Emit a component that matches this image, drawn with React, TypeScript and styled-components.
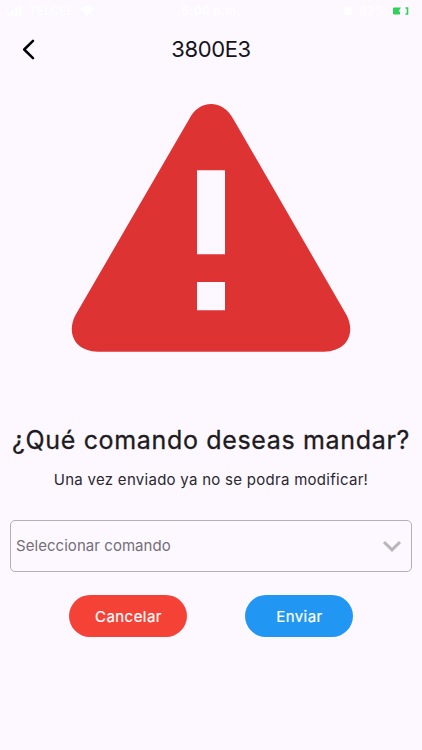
import React from "react";
import styled, { createGlobalStyle } from "styled-components";

const GlobalStyle = createGlobalStyle`
  * { box-sizing: border-box; }
  body { margin: 0; background: #fdf8ff; font-family: Inter, "Liberation Sans", sans-serif; }
`;

const Screen = styled.main`
  width: 422px;
  height: 750px;
  display: flex;
  flex-direction: column;
  background: #fdf8ff;
  overflow: hidden;
`;

const StatusBar = styled.div`
  height: 22px;
  padding: 0 12px 0 7px;
  display: grid;
  grid-template-columns: 1fr auto 1fr;
  align-items: center;
  color: #fff;
  font-size: 12px;
  line-height: 22px;
`;

const StatusGroup = styled.div<{ $end?: boolean }>`
  display: flex;
  align-items: center;
  gap: 7px;
  justify-content: ${(p) => (p.$end ? "flex-end" : "flex-start")};
`;

const Clock = styled.span`
  padding-left: 5px;
  font-weight: 600;
  letter-spacing: 0.3px;
`;

const Header = styled.header`
  height: 54px;
  display: grid;
  grid-template-columns: 57px 1fr 57px;
  align-items: center;
`;

const BackButton = styled.button`
  border: 0;
  padding: 0;
  height: 54px;
  background: none;
  display: flex;
  align-items: center;
  justify-content: center;
`;

const Title = styled.h1`
  margin: 0;
  text-align: center;
  font-size: 22px;
  line-height: 26px;
  font-weight: 400;
  letter-spacing: -0.4px;
  color: #16141a;
`;

const Warning = styled.div`
  height: 304px;
  padding-top: 27px;
  display: flex;
  justify-content: center;
`;

const Question = styled.h2`
  margin: 44px 0 0;
  text-align: center;
  white-space: nowrap;
  font-size: 25px;
  line-height: 32px;
  font-weight: 400;
  letter-spacing: 0.66px;
  -webkit-text-stroke: 0.3px #1d1b20;
  color: #1d1b20;
`;

const Note = styled.p`
  margin: 13px 0 0;
  text-align: center;
  font-size: 15px;
  line-height: 22px;
  letter-spacing: 0.28px;
  color: #2b292e;
`;

const Select = styled.button`
  margin: 29px 10px 0;
  height: 52px;
  padding: 0 9px 0 5px;
  border: 1.5px solid #b3afb5;
  border-radius: 5px;
  background: transparent;
  display: flex;
  align-items: center;
  justify-content: space-between;
  font: 400 15px/22px Inter, "Liberation Sans", sans-serif;
  letter-spacing: 0.05px;
  color: #736f77;
`;

const Actions = styled.div`
  margin: 23.3px 0 0 69.3px;
  display: flex;
  gap: 58.7px;
`;

const Pill = styled.button<{ $color: string; $width: number }>`
  width: ${(p) => p.$width}px;
  height: 42px;
  padding: 2px 0 0 1px;
  border: 0;
  border-radius: 21px;
  background: ${(p) => p.$color};
  color: #fff;
  font: 400 15px/22px Inter, "Liberation Sans", sans-serif;
  -webkit-text-stroke: 0.2px #fff;
  letter-spacing: 0.45px;
`;

export default function App() {
  return (
    <>
      <GlobalStyle />
      <Screen>
        <StatusBar>
          <StatusGroup>
            <svg width="15" height="10" viewBox="0 0 15 10" fill="#fff">
              <path d="M0 7h2.5v3H0zM4 5h2.5v5H4zM8 2.5h2.5V10H8zM12 0h2.5v10H12z" />
            </svg>
            <span>TELCEL</span>
            <svg width="14" height="10" viewBox="0 0 14 10" fill="#fff">
              <path d="M0 3Q7-3 14 3L7 10Z" />
            </svg>
          </StatusGroup>
          <Clock>6:09 p.m.</Clock>
          <StatusGroup $end>
            <svg width="8" height="8" viewBox="0 0 8 8" fill="#fff">
              <rect width="8" height="8" rx="2" />
            </svg>
            <span>82%</span>
            <svg width="17" height="8" viewBox="0 0 17 8">
              <path d="M1 0.5h7L5.5 4.4H7V7.500H1Q0 7.500 0 6.500V1.500Q0 0.500 1 0.500Z" fill="#30d158" />
              <path d="M12.500 1h2v6h-2" fill="none" stroke="#30d158" strokeWidth="1.6" />
            </svg>
          </StatusGroup>
        </StatusBar>
        <Header>
          <BackButton aria-label="Volver">
            <svg width="13" height="21" viewBox="0 0 13 21">
              <path d="M11 1.8L2.2 10.5L11 19.2" fill="none" stroke="#000" strokeWidth="2.5" strokeLinecap="round" strokeLinejoin="round" />
            </svg>
          </BackButton>
          <Title>3800E3</Title>
        </Header>
        <Warning>
          <svg width="280" height="250" viewBox="71 103 280 250">
            <path
              fill="#de3333"
              fillRule="evenodd"
              d="M189.500 118.500C199 99 223 99 233 118.500L346.500 315C356 333 347 351.700 324 351.700H98C75 351.700 66 333 75.500 315ZM197 170.300V254.200H225V170.300ZM197 282V310.200H225V282Z"
            />
          </svg>
        </Warning>
        <Question>¿Qué comando deseas mandar?</Question>
        <Note>Una vez enviado ya no se podra modificar!</Note>
        <Select>
          <span>Seleccionar comando</span>
          <svg width="20" height="13" viewBox="0 0 20 13">
            <path d="M2 2L10 9.800L18 2" fill="none" stroke="#b9b5bb" strokeWidth="3" />
          </svg>
        </Select>
        <Actions>
          <Pill $color="#f44336" $width={117.3}>Cancelar</Pill>
          <Pill $color="#2196f3" $width={107.3}>Enviar</Pill>
        </Actions>
      </Screen>
    </>
  );
}
